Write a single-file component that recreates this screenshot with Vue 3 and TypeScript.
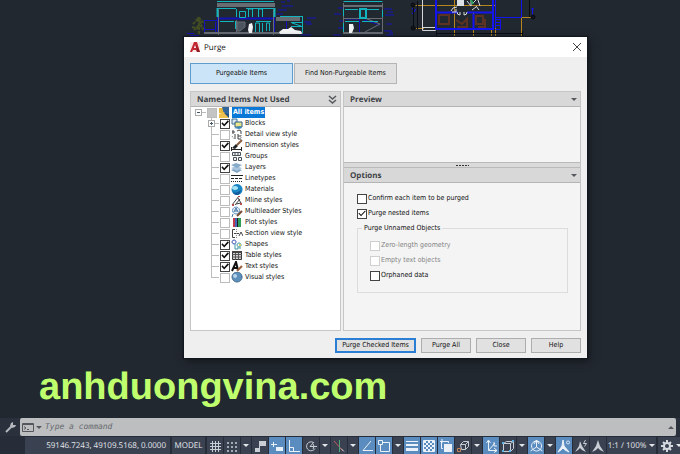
<script setup lang="ts">
import { ref } from 'vue'

interface Stroke {
  d: string
  fill?: string
  stroke?: string
  width?: number
  dash?: string
}

interface TreeItem {
  id: string
  label: string
  checked: boolean
  expandable?: boolean
  icon: Stroke[]
}

interface Tool {
  name: string
  active?: boolean
  menu?: boolean
  icon: Stroke[]
}

const items = ref<TreeItem[]>([
  {
    id: 'blocks', label: 'Blocks', checked: true, expandable: true,
    icon: [
      { d: 'M1 1h5v5H1z', fill: '#dce9f2', stroke: '#3c6f94' },
      { d: 'M4 4h7v5H4z', fill: '#e9e58a', stroke: '#2c5f86' },
      { d: 'M3 10l6-2 2 2-3 1z', fill: '#3c86b8' },
    ],
  },
  {
    id: 'detail', label: 'Detail view style', checked: false,
    icon: [
      { d: 'M1 3h3M2 1v4M6 2l2-1 2 1v3M4 5v5M7 5v5h3M7 7h3', stroke: '#444' },
      { d: 'M1 7l2 3M10 6v5', stroke: '#777', dash: '1 1' },
    ],
  },
  {
    id: 'dimension', label: 'Dimension styles', checked: true,
    icon: [
      { d: 'M0 9.500h11M.5 7v4M10.500 7v4', stroke: '#222' },
      { d: 'M1 8l4-4 2 2-3 3z', fill: '#222' },
      { d: 'M6 5l5-5', stroke: '#8a5a3c', width: 2 },
    ],
  },
  {
    id: 'groups', label: 'Groups', checked: false,
    icon: [
      { d: 'M1.500 1.500h8v3h-8zM2.500 6.500h3v3h-3zM7.500 6.500h3v3h-3z', fill: '#eef2f5', stroke: '#4a5158' },
      { d: 'M4 2v2M7 2v2', stroke: '#4a5158' },
    ],
  },
  {
    id: 'layers', label: 'Layers', checked: true,
    icon: [
      { d: 'M0 8l5-2 6 2-5 3z', fill: '#7fa3c4' },
      { d: 'M0 6l5-2 6 2-5 3z', fill: '#a8c4dc' },
      { d: 'M0 3l5-2 6 2-5 3z', fill: '#86abc9' },
    ],
  },
  {
    id: 'linetypes', label: 'Linetypes', checked: false,
    icon: [
      { d: 'M0 2.500h12', stroke: '#222' },
      { d: 'M0 5.500h12', stroke: '#222', dash: '3 1' },
      { d: 'M0 8.500h12', stroke: '#222', dash: '1 1' },
    ],
  },
  {
    id: 'materials', label: 'Materials', checked: false,
    icon: [
      { d: 'M6 0a5.500 5.500 0 1 0 .1 0z', fill: '#1b86c4' },
      { d: 'M4 2a3 2 0 1 0 .1 0z', fill: '#a9e4f4' },
      { d: 'M2 8q4 2 8-2-1 5-4 5-3 0-4-3z', fill: '#125a9c' },
    ],
  },
  {
    id: 'mline', label: 'Mline styles', checked: false,
    icon: [
      { d: 'M1 10L8 1M4 10l5-6M7 3l3 5-5 1', stroke: '#444' },
      { d: 'M1 9h2v2H1zM9 8h2v2H9zM7 1h2v1H7z', fill: '#b84b4b' },
    ],
  },
  {
    id: 'multileader', label: 'Multileader Styles', checked: false,
    icon: [
      { d: 'M5 1a3.500 3.500 0 1 0 .1 0z', fill: '#eaf2fa', stroke: '#5d8fbd' },
      { d: 'M3 6l2-4 2 4M4 5h2M2 8l-1 3', stroke: '#3f6f9f' },
      { d: 'M6 10l5-5', stroke: '#7b4a33', width: 2 },
    ],
  },
  {
    id: 'plot', label: 'Plot styles', checked: false,
    icon: [
      { d: 'M2 1h2v9H2z', fill: '#c43a4a' },
      { d: 'M4 1h2v9H4z', fill: '#4267b8' },
      { d: 'M7 1h3v9H7z', fill: '#2f9d58' },
      { d: 'M6.500 1v9', stroke: '#222' },
    ],
  },
  {
    id: 'section', label: 'Section view style', checked: false,
    icon: [
      { d: 'M4 1.500H1.500v8H4M3 5.500h5M8 8l2-4 2 4', stroke: '#444' },
      { d: 'M5.500 1v10', stroke: '#888', dash: '1 1' },
    ],
  },
  {
    id: 'shapes', label: 'Shapes', checked: true,
    icon: [
      { d: 'M3 1a2 2 0 1 0 .1 0z', stroke: '#3a52b4' },
      { d: 'M4 5v5h3M8 4a2 2 0 1 0 .1 0zM6 9h4', stroke: '#3c97a8' },
      { d: 'M8 5h2v2H8z', fill: '#d8cf5a' },
    ],
  },
  {
    id: 'table', label: 'Table styles', checked: true,
    icon: [
      { d: 'M1.500 1.500h9v8h-9z', fill: '#d5d5d5', stroke: '#333' },
      { d: 'M1 2h10', stroke: '#444', width: 2 },
      { d: 'M1 4.500h10M1 7h10M4.500 3v7M7.500 3v7', stroke: '#555' },
    ],
  },
  {
    id: 'text', label: 'Text styles', checked: true,
    icon: [
      { d: 'M1 10L5 1l2 8M3 7h4', stroke: '#111', width: 2 },
      { d: 'M6 10l5-5', stroke: '#9a5f3c', width: 2 },
    ],
  },
  {
    id: 'visual', label: 'Visual styles', checked: false,
    icon: [
      { d: 'M6 0a5 5 0 1 0 .1 0z', fill: '#5d8fbb', stroke: '#40688c' },
      { d: 'M4 2a2 2 0 1 0 .1 0z', fill: '#b5d3ea' },
    ],
  },
])

const confirmEach = ref(false)
const nested = ref(true)
const orphaned = ref(false)
const command = ref('')

const ink = '#c9cdd4'
const lit = '#eaf1f8'

const tools: Tool[] = [
  { name: 'Grid', icon: [{ d: 'M4.500 2v11M7.500 2v11M10.500 2v11M2 4.500h11M2 7.500h11M2 10.500h11', stroke: ink }] },
  {
    name: 'Snap', menu: true,
    icon: [{ d: 'M2 3h2v2H2zM6 3h2v2H6zM10 3h2v2h-2zM2 7h2v2H2zM6 7h2v2H6zM10 7h2v2h-2zM2 11h2v2H2zM6 11h2v2H6zM10 11h2v2h-2z', fill: '#a5abb5' }],
  },
  { name: 'Infer constraints', icon: [{ d: 'M6 2h7v5H6z', fill: ink }, { d: 'M6.500 2v8', stroke: ink }, { d: 'M2 9h5v4H2z', fill: ink }] },
  { name: 'Dynamic input', active: true, icon: [{ d: 'M1 5.500h6M3.500 3v5', stroke: lit }, { d: 'M6 8h7v4H6z', fill: lit }] },
  { name: 'Ortho', active: true, icon: [{ d: 'M2.500 1v11.500H13M2.500 8.500h4v4', stroke: lit }] },
  {
    name: 'Polar tracking', menu: true,
    icon: [{ d: 'M9.500 3.500a4.500 4.500 0 1 0 1.500 6M6 7.500L10 3M6 7.500h7M9 5q2 2 0 5', stroke: ink }],
  },
  {
    name: 'Isometric drafting', menu: true,
    icon: [{ d: 'M2 2l9 10', stroke: '#c45561' }, { d: 'M7.500 1v12', stroke: '#4fa577' }, { d: 'M9 9.500l3 3', stroke: ink }],
  },
  { name: 'Snap tracking', active: true, icon: [{ d: 'M11 2L3 11.500h10', stroke: lit }] },
  {
    name: 'Object snap', active: true, menu: true,
    icon: [{ d: 'M3.500 3.500h9v9h-9z', stroke: lit }, { d: 'M1.500 1.500h4v4h-4z', fill: '#5b8cc0', stroke: lit }],
  },
  { name: 'Lineweight', active: true, icon: [{ d: 'M1 2h12v1H1zM1 5h12v2H1zM1 9h12v3H1z', fill: lit }] },
  {
    name: 'Transparency', active: true,
    icon: [
      { d: 'M1.500 1.500h11v11h-11z', stroke: lit },
      { d: 'M2 3h10M2 7h10M2 11h10', stroke: lit, width: 2, dash: '2 2' },
      { d: 'M4 5h8M4 9h8', stroke: lit, width: 2, dash: '2 2' },
    ],
  },
  { name: 'Selection cycling', active: true, icon: [{ d: 'M5 5h8v8H5z', fill: lit }, { d: 'M4 9.500H2.500v-7h7V4M1 2.500h4M3 0v4', stroke: lit }] },
  {
    name: '3D object snap', menu: true,
    icon: [{ d: 'M4.500 5.500l3-3h5v5l-3 3h-4zM4.500 5.500h5v5M9.500 5.500l3-3', stroke: ink }, { d: 'M1.500 9.500h3v3h-3z', stroke: '#c58458' }],
  },
  { name: 'Dynamic UCS', active: true, icon: [{ d: 'M4.500 2v9.500H13M2.500 4l2-3 2 3M5 11l6-7M10 3v4h3M10 9l3 2.500-3 2', stroke: lit }] },
  {
    name: 'Selection filter', menu: true,
    icon: [{ d: 'M2.500 4.500l3-2h7v7l-3 3h-7zM2.500 4.500h7v8M9.500 4.500l3-2', stroke: ink }, { d: 'M1 3h2v2H1zM1 11h2v2H1zM8 11h2v2H8zM11 1h2v2h-2z', fill: '#5eb1e0' }],
  },
  {
    name: 'Gizmo', active: true, menu: true,
    icon: [{ d: 'M7.500 2a5 5 0 1 0 .1 0zM7.500 1v7M7.500 8l-6 4M7.500 8l6 4M5 5l2.500-4L10 5', stroke: lit }],
  },
  { name: 'Annotation visibility', active: true, icon: [{ d: 'M6 1l1 6 5 6-4-2-2-2-2 2-3 2 4-6z', fill: lit, stroke: lit }, { d: 'M11 2a1.500 1.500 0 1 0 .1 0z', stroke: lit }] },
  { name: 'AutoScale', icon: [{ d: 'M6 2l2 5 4 6-4-2-2-2-2 2-3 2 4-6z', fill: ink }, { d: 'M11.500 1L9.500 4.500h3l-2 3', stroke: ink }] },
  { name: 'Annotation scale', icon: [{ d: 'M7 1l2 6 4 6-4-2-2-2-2 2-4 2 4-6z', fill: ink }] },
]
</script>

<template>
  <main class="screen">
    <section class="canvas">
      <svg class="drawing" width="680" height="37" viewBox="0 0 680 37" fill="none" aria-hidden="true">
        <path
          d="M199 34V20M193 24l6-6 6 6M194 30l5-5 6 4M196 19l6 5M192 27l8 2M198 17l5 13"
          stroke="#434d22" stroke-width="2" stroke-dasharray="3 1"
        />
        <g stroke="#1212b8">
          <path d="M204 20.500h13M204.500 20v14M215.500 22v12M204 29.500h12M187 33.500h7M190 35.500h9" />
          <path d="M217 18.500h58" stroke-width="2" />
          <path d="M217.500 8v26M274.500 8v26M286.500 20v14" />
          <path d="M278 10h9M282 6h11M276 14h7M281 2h4M304 22h7M307 18h9M306 24h6M301 35h10M287 1h3" />
          <path d="M333 35h8M338 28h5M334 14h7M338 8h5M384 9h8M385 15h9M386 24h6M384 31h8M389 33h4M339 21h5M387 12h6M386 35h7" />
          <path d="M359.500 20v13M345 19h15M364 20l16 5" />
        </g>
        <g stroke="#686d74">
          <path d="M217 5h58" stroke-width="4" />
          <path d="M276 19h24" stroke-width="4" />
          <path d="M204 33h99M343 33h40M344 6h38" stroke-width="2" />
          <path d="M218.500 8v27M273.500 8v27M236.500 20v12M343.500 3v31M382.500 3v31M344 18.500h38M365 32l15-8-18-7" />
          <path d="M237 31V22h8v5l-5 4z" fill="#4c555e" />
        </g>
        <g stroke="#12b5bd">
          <path d="M217 1.500h57M219 8.500h17M246 8.500h27M220 21.500h14M256 21.500h15M280 16.500h22M302.500 16v17M291 22.500h11M291 26.500h11" />
          <path d="M236.500 9v8M239.500 11.500h6v6h-6zM248.500 17V9h4v8M258.500 17V9h4v8M255.500 32v-9h4v9M266.500 31v-8h3v8M235.500 21v8M292 23l9 3M262.500 23v9" />
          <path d="M343.500 1.500h39M343.500 9v7M382.500 10v7M345 9.500h13M367 9.500h12M345 21.500h14M362 21.500h16M343.500 23v9" />
          <path d="M217.500 8v9M274.500 8v9M360 9h6v9h-6z" stroke-width="2" />
        </g>
        <path d="M249 24l3-1 1 4-1 6h-3l-1-3zM279 32l4-3h5l3-2 4 3 6 1 1 3h-22zM349 24h4l1 4-2 5h-3z" fill="#f2f4f6" />
        <g stroke="#b6851f">
          <path d="M414 5.500h82M416 28.500h8M495 17.500h36" />
          <path d="M454.500 0v36M473.500 13v23M521.500 17v19M491.500 28v8M495.500 17v19" />
        </g>
        <path d="M439 15h10v9h-10zM456 20l6 4 5-5v8h-10M476 16h7v8h-7zM485 19v8h-7" stroke="#5c3323" stroke-width="2" />
        <path d="M422.500 0v30.500h13V0M423 27.500h12" stroke="#d3d5d7" />
        <g stroke="#1414ef">
          <path d="M436 0v29h57V0M436 12.500h22M467 12.500h26M473.500 14v15" stroke-width="2" />
          <path d="M495 17.500h26.500V0M495 19.500h5.500v10H495M495 22.500h5M495 25.500h5M412 8l3 4M412 14l4-5M531 9h3M532.500 15V8M495.500 0v28" />
        </g>
        <path d="M457 0h7v6h-7z" fill="#dce1e6" />
        <path
          d="M457 7q-5 0-6 4M456 9v3l-4 0M457 12q0 3 3 3v-3M464 12v3q3 0 3-3M467 1l4 5V0M476 0l-4 4M478 0l2 6M472 10l4-3M476 6l3 4"
          stroke="#d7dbe0"
        />
        <path d="M471 0l2 4" stroke="#2aa35a" stroke-width="2" />
        <g stroke="#090c10">
          <path d="M413.500 8v18M417.500 1v28M529.500 0v17M436 33.500h86M436.500 31v6M522.500 31v6" />
          <path d="M413 3a2 2 0 1 0 .1 0zM413 26a2 2 0 1 0 .1 0zM533 15a2 2 0 1 0 .1 0z" fill="#11161b" />
        </g>
      </svg>

      <section class="dialog" role="dialog" aria-labelledby="dialog-title">
        <header class="titlebar">
          <svg width="10" height="10" viewBox="0 0 10 10" aria-hidden="true">
            <path d="M0 0h10v10H0z" fill="#fae9e7" />
            <path d="M0 10L4 0h3l3 10H7L6 8H3l-1 2z" fill="#c42732" />
            <path d="M4 6l1-3 1 3z" fill="#fff" />
            <path d="M6 3l4 7H7z" fill="#8c1c26" />
          </svg>
          <h1 id="dialog-title">Purge</h1>
          <button class="close" type="button" aria-label="Close dialog">
            <svg width="8" height="8" viewBox="0 0 8 8"><path d="M0 0l8 8M8 0L0 8" stroke="#444" fill="none" /></svg>
          </button>
        </header>

        <div class="body">
          <nav class="tabs">
            <button class="tab selected" type="button">Purgeable Items</button>
            <button class="tab" type="button">Find Non-Purgeable Items</button>
          </nav>

          <div class="columns">
            <section class="panel tree-panel">
              <header class="panel-head">
                <h2>Named Items Not Used</h2>
                <svg width="9" height="9" viewBox="0 0 9 9" fill="none" stroke="#55585c" aria-hidden="true">
                  <path d="M1 1l3.500 3L8 1M1 5l3.500 3L8 5" stroke-width="1.500" />
                </svg>
              </header>
              <ul class="tree">
                <li class="row">
                  <span class="root-branch"><i class="expander minus"></i></span>
                  <input id="all" class="tick mixed" type="checkbox" />
                  <svg class="glyph" width="12" height="11" viewBox="0 0 12 11" aria-hidden="true">
                    <path d="M1 1h5v5H1z" fill="#e7b83c" />
                    <path d="M4 0h7v7H6z" fill="#33679b" />
                    <path d="M1 7l5-2 5 6H1z" fill="#f0c24c" />
                    <path d="M6 6l5 1v4z" fill="#245080" />
                  </svg>
                  <label for="all" class="highlight">All items</label>
                </li>
                <li v-for="item in items" :key="item.id" class="row">
                  <span class="branch"><i v-if="item.expandable" class="expander plus"></i></span>
                  <input :id="item.id" v-model="item.checked" class="tick" type="checkbox" />
                  <svg class="glyph" width="12" height="11" viewBox="0 0 12 11" aria-hidden="true">
                    <path
                      v-for="(s, i) in item.icon" :key="i" :d="s.d" :fill="s.fill ?? 'none'"
                      :stroke="s.stroke ?? 'none'" :stroke-width="s.width ?? 1" :stroke-dasharray="s.dash"
                    />
                  </svg>
                  <label :for="item.id">{{ item.label }}</label>
                </li>
              </ul>
            </section>

            <section class="panel side">
              <header class="panel-head"><h2>Preview</h2><i class="caret"></i></header>
              <div class="preview"></div>
              <div class="splitter"><i></i></div>
              <header class="panel-head"><h2>Options</h2><i class="caret"></i></header>
              <div class="options">
                <label class="option"><input v-model="confirmEach" class="box" type="checkbox" />Confirm each item to be purged</label>
                <label class="option"><input v-model="nested" class="box" type="checkbox" />Purge nested items</label>
                <fieldset>
                  <legend>Purge Unnamed Objects</legend>
                  <label class="option off"><input class="box" type="checkbox" disabled />Zero-length geometry</label>
                  <label class="option off"><input class="box" type="checkbox" disabled />Empty text objects</label>
                  <label class="option"><input v-model="orphaned" class="box" type="checkbox" />Orphaned data</label>
                </fieldset>
              </div>
            </section>
          </div>

          <footer class="actions">
            <button class="action primary" type="button">Purge Checked Items</button>
            <button class="action" type="button">Purge All</button>
            <button class="action" type="button">Close</button>
            <button class="action" type="button">Help</button>
          </footer>
        </div>
      </section>

      <p class="site">anhduongvina.com</p>
    </section>

    <div class="command">
      <button class="wrench" type="button" aria-label="Customize">
        <svg width="11" height="11" viewBox="0 0 11 11" fill="none" stroke="#b4b8be">
          <path d="M1 10l6-6" stroke-width="2" />
          <path d="M6 1l2-1v3l3 0-1 2-3 1-2-2z" fill="#b4b8be" stroke="none" />
        </svg>
      </button>
      <div class="prompt">
        <svg width="12" height="9" viewBox="0 0 12 9" fill="none" stroke="#53575c" aria-hidden="true">
          <path d="M.5.500h11v8H.5zM0 1.500h12M2 3.500l2 1.500-2 1.500M5 6.500h2" />
        </svg>
        <i class="caret"></i>
        <input v-model="command" type="text" placeholder="Type a command" aria-label="Command" />
        <i class="caret up"></i>
      </div>
    </div>

    <footer class="status">
      <span class="cell coords">59146.7243, 49109.5168, 0.0000</span>
      <button class="cell model" type="button">MODEL</button>
      <template v-for="tool in tools" :key="tool.name">
        <button class="cell tool" :class="{ active: tool.active }" type="button" :aria-label="tool.name">
          <svg width="14" height="14" viewBox="0 0 14 14" aria-hidden="true">
            <path
              v-for="(s, i) in tool.icon" :key="i" :d="s.d" :fill="s.fill ?? 'none'"
              :stroke="s.stroke ?? 'none'" :stroke-width="s.width ?? 1" :stroke-dasharray="s.dash"
            />
          </svg>
        </button>
        <button v-if="tool.menu" class="cell more" type="button" :aria-label="tool.name + ' settings'"><i class="caret"></i></button>
      </template>
      <button class="cell scale" type="button">1:1 / 100%<i class="caret"></i></button>
      <button class="cell gear" type="button" aria-label="Workspace">
        <svg width="12" height="12" viewBox="0 0 12 12" fill="none" stroke="#d6dae0" aria-hidden="true">
          <circle cx="6" cy="6" r="3" stroke-width="2" />
          <path d="M6 0v3M6 9v3M0 6h3M9 6h3M2 2l2 2M8 8l2 2M10 2L8 4M4 8l-2 2" stroke-width="2" />
        </svg>
        <i class="caret"></i>
      </button>
    </footer>
  </main>
</template>

<style>
body {
  background: #222830;
}
</style>

<style scoped>
.screen {
  display: flex;
  flex-direction: column;
  min-height: 100vh;
  overflow: hidden;
  background: #222830;
  color: #111;
  font: 7px/11px "DejaVu Sans Condensed", "Liberation Sans", sans-serif;
  text-rendering: geometricPrecision;
}

* {
  box-sizing: border-box;
}

button,
input {
  margin: 0;
  padding: 0;
  border: 0;
  background: none;
  color: inherit;
  font: inherit;
  text-rendering: inherit;
  white-space: nowrap;
}

svg {
  flex: none;
}

.caret {
  flex: none;
  border: 3px solid transparent;
  border-top-color: currentColor;
  border-bottom: 0;
}

.caret.up {
  border-top: 0;
  border-bottom: 3px solid currentColor;
}

.canvas {
  position: relative;
  display: flex;
  flex: 1;
  flex-direction: column;
  justify-content: flex-end;
}

.drawing {
  position: absolute;
  top: 0;
  left: 0;
}

.dialog {
  position: absolute;
  top: 37px;
  left: 184px;
  width: 403px;
  background: #efefef;
  box-shadow: 0 0 1px 1px #11171c, 2px 3px 8px #12161b;
}

.titlebar {
  display: flex;
  align-items: center;
  gap: 4px;
  height: 20px;
  padding: 0 6px;
  background: #fff;
}

h1 {
  flex: 1;
  margin: 0;
  font: 8px/11px "Open Sans", sans-serif;
}

.close {
  display: flex;
}

.body {
  display: flex;
  flex-direction: column;
  gap: 7px;
  padding: 6px 6px 5px;
}

.tabs {
  display: flex;
  gap: 1px;
}

.tab {
  width: 103px;
  height: 21px;
  border: 1px solid #b5b5b5;
  background: #e1e1e1;
}

.tab.selected {
  border-color: #5f9dcf;
  background: #cce4f7;
}

.columns {
  display: grid;
  grid-template-columns: 151px 1fr;
  gap: 2px;
}

.panel {
  border: 1px solid #c6c6c6;
}

.tree-panel {
  background: #fff;
}

.panel-head {
  display: flex;
  align-items: center;
  justify-content: space-between;
  height: 15px;
  padding: 0 3px 0 6px;
  border-bottom: 1px solid #b4b4b4;
  background: #d8d8d8;
  color: #55585c;
}

h2 {
  margin: 0;
  color: #404347;
  font: bold 8px/11px "Open Sans", sans-serif;
}

.tree {
  margin: 0;
  padding: 0 0 0 4px;
  list-style: none;
}

.row {
  display: flex;
  align-items: center;
  height: 11px;
  white-space: nowrap;
}

.root-branch {
  display: flex;
  align-items: center;
  width: 12px;
  height: 11px;
  background: linear-gradient(#bbb, #bbb) 0 5px / 11px 1px no-repeat;
}

.branch {
  display: flex;
  align-items: center;
  width: 12px;
  height: 11px;
  margin-left: 13px;
  background:
    linear-gradient(#bbb, #bbb) 3px 0 / 1px 11px no-repeat,
    linear-gradient(#bbb, #bbb) 3px 5px / 8px 1px no-repeat;
}

.row:last-child .branch {
  background:
    linear-gradient(#bbb, #bbb) 3px 0 / 1px 5px no-repeat,
    linear-gradient(#bbb, #bbb) 3px 5px / 8px 1px no-repeat;
}

.expander {
  width: 7px;
  height: 7px;
  border: 1px solid #aaa;
  background: linear-gradient(#456, #456) 1px 2px / 3px 1px no-repeat #fff;
}

.expander.plus {
  background:
    linear-gradient(#456, #456) 1px 2px / 3px 1px no-repeat,
    linear-gradient(#456, #456) 2px 1px / 1px 3px no-repeat #fff;
}

.tick,
.box {
  display: block;
  flex: none;
  appearance: none;
  width: 10px;
  height: 10px;
  border: 1px solid #bcbcbc;
  background: #fff;
}

.tick:checked,
.box {
  border-color: #444;
}

.tick.mixed {
  background: #c4c4c4;
}

.tick:checked::before,
.box:checked::before {
  display: block;
  width: 8px;
  height: 8px;
  background: #111;
  clip-path: polygon(5% 50%, 20% 35%, 40% 58%, 85% 10%, 100% 25%, 40% 88%);
  content: "";
}

.box:checked::before {
  clip-path: polygon(5% 50%, 14% 40%, 38% 66%, 88% 12%, 96% 22%, 38% 84%);
}

.box:disabled {
  border-color: #cfcfcf;
}

.glyph {
  margin: 0 2px 0 1px;
}

.highlight {
  padding: 0 1px;
  background: #0a78d7;
  color: #fff;
  font-weight: bold;
}

.side {
  display: flex;
  flex-direction: column;
  background: #f4f4f4;
}

.preview {
  height: 55px;
}

.splitter {
  display: flex;
  align-items: center;
  justify-content: center;
  height: 6px;
  border: 1px solid #b9b9b9;
  border-width: 1px 0;
  background: #dadada;
}

.splitter i {
  width: 13px;
  height: 1px;
  background: repeating-linear-gradient(90deg, #333 0 2px, transparent 2px 3px);
}

.options {
  display: flex;
  flex-direction: column;
  gap: 4px;
  padding: 10px 12px 37px 13px;
}

.option {
  display: flex;
  align-items: center;
  gap: 1px;
}

.option.off {
  color: #858585;
}

fieldset {
  display: flex;
  flex-direction: column;
  gap: 4px;
  min-width: 0;
  margin: 0;
  padding: 6px 12px 11px;
  border: 1px solid #dcdcdc;
}

legend {
  margin-left: -8px;
  padding: 0 2px;
}

.actions {
  display: flex;
  justify-content: flex-end;
  gap: 5px;
}

.action {
  width: 50px;
  height: 15px;
  border: 1px solid #adadad;
  background: #e1e1e1;
}

.action.primary {
  width: 81px;
  border: 2px solid #2a7fd4;
}

.site {
  margin: 0 0 9px 39px;
  color: #bfff6e;
  font: bold 38px/44px "Liberation Sans", Arial, sans-serif;
}

.command {
  display: flex;
  height: 18px;
  background: #2a303c;
}

.wrench {
  display: flex;
  align-items: center;
  justify-content: center;
  width: 20px;
}

.prompt {
  display: flex;
  flex: 1;
  align-items: center;
  gap: 2px;
  margin-right: 4px;
  padding: 0 2px;
  border-radius: 2px;
  background: #bdbec0;
  color: #53575c;
}

.prompt input {
  flex: 1;
  min-width: 0;
  padding-left: 1px;
  outline: 0;
  font: italic 8px/14px "DejaVu Sans Mono", monospace;
}

.prompt input::placeholder {
  color: #66696d;
}

.status {
  display: flex;
  gap: 1px;
  height: 18px;
  padding: 1px 0 0 25px;
  background: #262c38;
  color: #e3e6ea;
  font: 8px/16px "Open Sans", sans-serif;
  white-space: nowrap;
}

.cell {
  display: flex;
  flex: none;
  align-items: center;
  justify-content: center;
  background: #3a4252;
}

.coords {
  width: 145px;
  padding-right: 4px;
  justify-content: flex-end;
}

.model {
  width: 33px;
  margin: 0 1px;
}

.tool {
  width: 16px;
}

.tool.active {
  background: #5b8cc0;
}

.more {
  width: 10px;
}

.scale {
  gap: 3px;
  width: 49px;
}

.gear {
  flex: 1;
  gap: 3px;
  min-width: 22px;
  margin-left: 1px;
  padding-left: 3px;
  justify-content: flex-start;
}
</style>
